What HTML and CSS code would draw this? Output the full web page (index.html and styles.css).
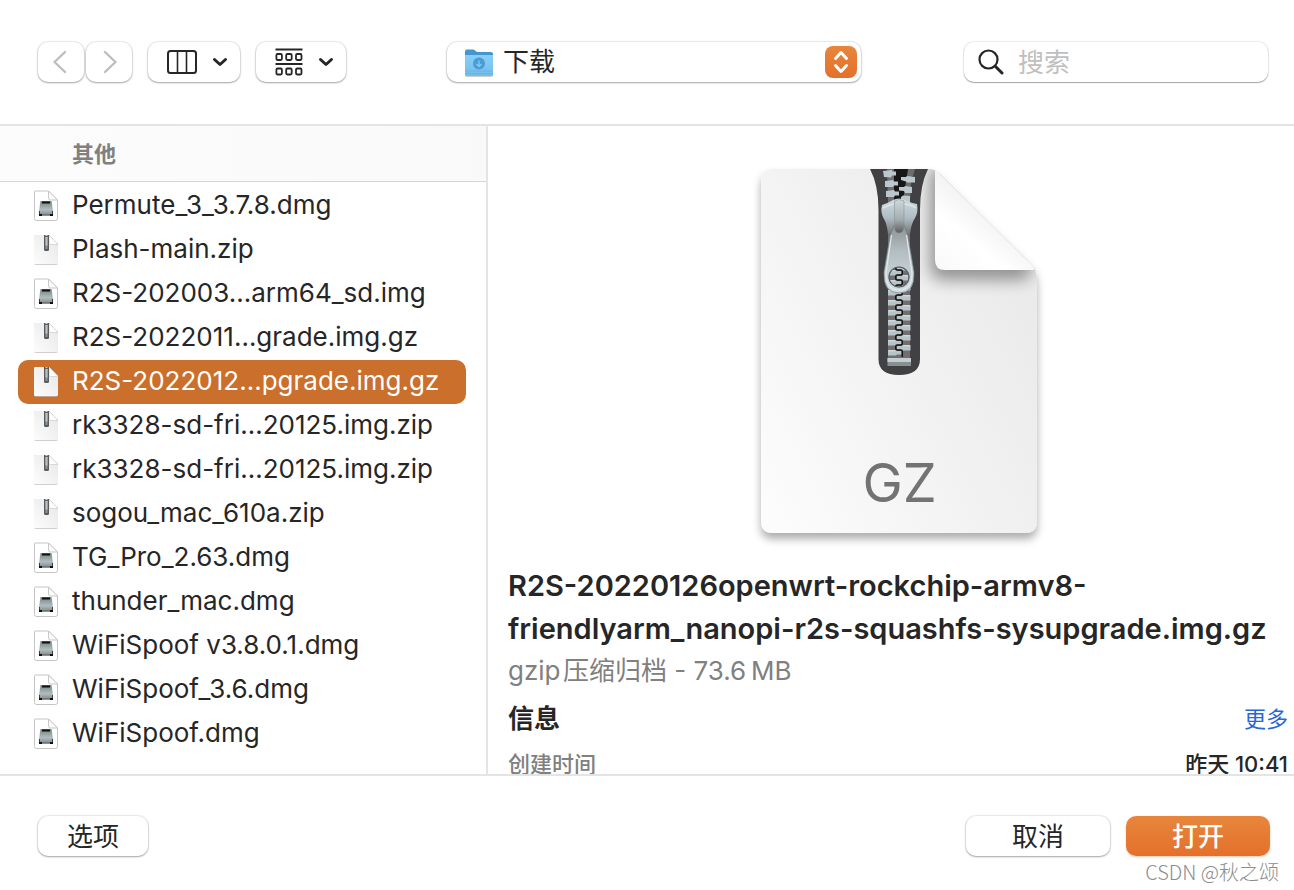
FILE: index.html
```html
<!DOCTYPE html>
<html lang="zh-Hans">
<head>
  <meta charset="UTF-8">
  <title>打开</title>
  <link rel="stylesheet" href="styles.css">
</head>
<body>
  <!-- shared icons -->
  <svg class="defs" width="0" height="0" aria-hidden="true">
    <defs>
      <linearGradient id="paper" x1="1" y1="0" x2="0" y2="1">
        <stop offset="0" stop-color="#e6e6e6"/>
        <stop offset="1" stop-color="#fdfdfd"/>
      </linearGradient>
      <linearGradient id="drive" x1="0" y1="0" x2="0" y2="1">
        <stop offset="0" stop-color="#6f8483"/>
        <stop offset="0.600" stop-color="#b3bcbf"/>
        <stop offset="1" stop-color="#7b8487"/>
      </linearGradient>
    </defs>
    <symbol id="icon-dmg" viewBox="0 0 28 32">
      <path d="M3.5 1h13L25.500 10v18.500a2 2 0 0 1-2 2h-19a2 2 0 0 1-2-2V2a1 1 0 0 1 1-1z" fill="#fff" stroke="#c4c4c4"/>
      <path d="M16.500 1v7a2 2 0 0 0 2 2h7z" fill="#fafafa" stroke="#c9c9c9"/>
      <path d="M8.500 11h11l1.500 10v4.500H7V21z" fill="url(#drive)"/>
      <path d="M10 12.500h8" stroke="#111" stroke-width="2"/>
      <path d="M7.500 21v4M20.500 21v4" stroke="#3c4244"/>
      <path d="M7 25h3M18 25h3" stroke="#111" stroke-width="2"/>
      <path d="M10 25h8" stroke="#596063"/>
    </symbol>
    <symbol id="icon-zip" viewBox="0 0 28 32">
      <path d="M3 1h14l9 9v19a2 2 0 0 1-2 2H4a2 2 0 0 1-2-2V2a1 1 0 0 1 1-1z" fill="#bbb" opacity="0.700"/>
      <path d="M3 1h14l9 9v18.500a1.500 1.500 0 0 1-1.500 1.500H3.500a1.500 1.500 0 0 1-1.500-1.500V2z" fill="url(#paper)"/>
      <path d="M17 1v8a1.500 1.500 0 0 0 1.500 1.500H26z" fill="#fff" stroke="#ccc" stroke-width="0.700"/>
      <path d="M12 1h5v14.500a1.500 1.500 0 0 1-1.500 1.500h-2a1.500 1.500 0 0 1-1.500-1.500z" fill="#5a5b5d"/>
      <path d="M14.500 1v3M14.500 11.500v4" stroke="#c5cdd0" stroke-width="2" stroke-dasharray="1 1"/>
      <path d="M14.500 4v6.500" stroke="#b7c0c4" stroke-width="2.400" stroke-linecap="round"/>
    </symbol>
    <symbol id="icon-chevron" viewBox="0 0 16 10">
      <path d="M2.500 2.500L8 7.500l5.500-5" fill="none" stroke="#262626" stroke-width="3" stroke-linecap="round" stroke-linejoin="round"/>
    </symbol>
  </svg>

  <div class="dialog">
    <header class="toolbar">
      <div class="nav-buttons">
        <button class="btn nav-btn" type="button" aria-label="后退" disabled>
          <svg width="16" height="24" viewBox="0 0 16 24"><path d="M12 2L1.500 12L12 22" fill="none" stroke="#bdbdbd" stroke-width="2.400" stroke-linecap="round" stroke-linejoin="round"/></svg>
        </button>
        <button class="btn nav-btn" type="button" aria-label="前进" disabled>
          <svg width="16" height="24" viewBox="0 0 16 24"><path d="M4 2L14.500 12L4 22" fill="none" stroke="#bdbdbd" stroke-width="2.400" stroke-linecap="round" stroke-linejoin="round"/></svg>
        </button>
      </div>
      <button class="btn view-btn" type="button" aria-label="分栏">
        <svg width="30" height="24" viewBox="0 0 30 24" fill="none" stroke="#262626">
          <rect x="1" y="1" width="28" height="22" rx="2.500" stroke-width="2"/>
          <path d="M10.500 1v22M19.500 1v22" stroke-width="1.600"/>
        </svg>
        <svg width="16" height="10"><use href="#icon-chevron"/></svg>
      </button>
      <button class="btn view-btn group-btn" type="button" aria-label="分组">
        <svg width="28" height="28" viewBox="0 0 28 28" fill="none" stroke="#262626" stroke-width="1.800">
          <path d="M0.500 1.500h27M0.500 16h27"/>
          <rect x="1.400" y="6" width="5.500" height="6" rx="1.200"/>
          <rect x="11.200" y="6" width="5.500" height="6" rx="1.200"/>
          <rect x="21" y="6" width="5.500" height="6" rx="1.200"/>
          <rect x="1.400" y="20.500" width="5.500" height="6" rx="1.200"/>
          <rect x="11.200" y="20.500" width="5.500" height="6" rx="1.200"/>
          <rect x="21" y="20.500" width="5.500" height="6" rx="1.200"/>
        </svg>
        <svg width="16" height="10"><use href="#icon-chevron"/></svg>
      </button>

      <div class="location">
        <svg class="folder" width="30" height="30" viewBox="0 0 30 30" aria-hidden="true">
          <defs>
            <linearGradient id="folder" x1="0" y1="0" x2="0" y2="1">
              <stop offset="0" stop-color="#86d0f8"/>
              <stop offset="1" stop-color="#74bdec"/>
            </linearGradient>
          </defs>
          <rect x="1" y="5" width="28" height="24" rx="2" fill="#9a9a9a" opacity="0.500"/>
          <path d="M1 3.500A2 2 0 0 1 3 1.500h6.500c1.500 0 2 2.500 4 2.500H27a2 2 0 0 1 2 2v6H1z" fill="#4596cf"/>
          <path d="M1 7h28v19.500a1.500 1.500 0 0 1-1.500 1.500h-25A1.500 1.500 0 0 1 1 26.500z" fill="url(#folder)"/>
          <path d="M1 23h28M1 25.500h28" stroke="#66b0e0" stroke-width="0.800"/>
          <circle cx="15" cy="15.500" r="6" fill="#4c9bd3"/>
          <path d="M15 12.500v5.500M12.500 16l2.500 2.500 2.500-2.500" fill="none" stroke="#83caf3" stroke-width="1.300"/>
        </svg>
        <select class="location-select" aria-label="位置">
          <option>下载</option>
        </select>
        <span class="stepper" aria-hidden="true">
          <svg width="32" height="32" viewBox="0 0 32 32" fill="none" stroke="#fff" stroke-width="3" stroke-linecap="round" stroke-linejoin="round"><path d="M10.500 12.500L16 6.500l5.500 6M10.500 19.500L16 25.500l5.500-6"/></svg>
        </span>
      </div>

      <label class="search">
        <svg width="26" height="26" viewBox="0 0 26 26" fill="none" stroke="#262626" aria-hidden="true">
          <circle cx="10.500" cy="10.500" r="9" stroke-width="2.200"/>
          <path d="M17.500 17.500l6.500 6.500" stroke-width="3" stroke-linecap="round"/>
        </svg>
        <input class="search-input" type="search" placeholder="搜索" aria-label="搜索">
      </label>
    </header>

    <main class="browser">
      <section class="column">
        <h2 class="group-title">其他</h2>
        <ul class="files">
          <li class="file"><svg class="file-icon"><use href="#icon-dmg"/></svg><span class="file-name">Permute_3_3.7.8.dmg</span></li>
          <li class="file"><svg class="file-icon"><use href="#icon-zip"/></svg><span class="file-name">Plash-main.zip</span></li>
          <li class="file"><svg class="file-icon"><use href="#icon-dmg"/></svg><span class="file-name">R2S-202003…arm64_sd.img</span></li>
          <li class="file"><svg class="file-icon"><use href="#icon-zip"/></svg><span class="file-name">R2S-2022011…grade.img.gz</span></li>
          <li class="file selected"><svg class="file-icon"><use href="#icon-zip"/></svg><span class="file-name">R2S-2022012…pgrade.img.gz</span></li>
          <li class="file"><svg class="file-icon"><use href="#icon-zip"/></svg><span class="file-name">rk3328-sd-fri…20125.img.zip</span></li>
          <li class="file"><svg class="file-icon"><use href="#icon-zip"/></svg><span class="file-name">rk3328-sd-fri…20125.img.zip</span></li>
          <li class="file"><svg class="file-icon"><use href="#icon-zip"/></svg><span class="file-name">sogou_mac_610a.zip</span></li>
          <li class="file"><svg class="file-icon"><use href="#icon-dmg"/></svg><span class="file-name">TG_Pro_2.63.dmg</span></li>
          <li class="file"><svg class="file-icon"><use href="#icon-dmg"/></svg><span class="file-name">thunder_mac.dmg</span></li>
          <li class="file"><svg class="file-icon"><use href="#icon-dmg"/></svg><span class="file-name">WiFiSpoof v3.8.0.1.dmg</span></li>
          <li class="file"><svg class="file-icon"><use href="#icon-dmg"/></svg><span class="file-name">WiFiSpoof_3.6.dmg</span></li>
          <li class="file"><svg class="file-icon"><use href="#icon-dmg"/></svg><span class="file-name">WiFiSpoof.dmg</span></li>
        </ul>
      </section>

      <section class="preview">
        <svg class="preview-icon" width="320" height="410" viewBox="-2 0 320 410" role="img" aria-label="GZ">
          <defs>
            <linearGradient id="sheet" x1="1" y1="0.200" x2="0" y2="0.900">
              <stop offset="0" stop-color="#e9e9e9"/>
              <stop offset="0.500" stop-color="#f2f2f2"/>
              <stop offset="1" stop-color="#fcfcfc"/>
            </linearGradient>
            <linearGradient id="fold" x1="0.600" y1="0.400" x2="0.100" y2="1">
              <stop offset="0" stop-color="#f0f0f0"/>
              <stop offset="0.500" stop-color="#fff"/>
              <stop offset="1" stop-color="#fafafa"/>
            </linearGradient>
            <linearGradient id="metal" x1="0" y1="0" x2="0" y2="1">
              <stop offset="0" stop-color="#d3dde1"/>
              <stop offset="0.550" stop-color="#aebbc2"/>
              <stop offset="1" stop-color="#777"/>
            </linearGradient>
            <linearGradient id="bridge" x1="0" y1="0" x2="0" y2="1">
              <stop offset="0" stop-color="#cdd8dc"/>
              <stop offset="0.600" stop-color="#a3adb1"/>
              <stop offset="1" stop-color="#5d5d5d"/>
            </linearGradient>
            <linearGradient id="pull" x1="0" y1="0" x2="0" y2="1">
              <stop offset="0" stop-color="#8c9193"/>
              <stop offset="0.400" stop-color="#b5bfc3"/>
              <stop offset="1" stop-color="#d2dde2"/>
            </linearGradient>
            <filter id="drop" x="-10%" y="-10%" width="120%" height="120%">
              <feDropShadow dx="0" dy="6" stdDeviation="4" flood-color="#000" flood-opacity="0.320"/>
            </filter>
            <filter id="soft" x="-40%" y="-40%" width="180%" height="180%">
              <feGaussianBlur stdDeviation="8"/>
            </filter>
            <clipPath id="sheet-clip">
              <path d="M33 19H189Q195 19 200 24L292 115Q297 120 297 130V371Q297 383 285 383H33Q21 383 21 371V31Q21 19 33 19z"/>
            </clipPath>
            <clipPath id="tape-clip">
              <path d="M130 19H188Q180 35 180 60V209Q180 225 159 225Q138.500 225 138.500 209V60Q138.500 35 130 19z"/>
            </clipPath>
            <g id="tooth-l">
              <path d="M148 0h8l1 1h4.500v3.500H157l-1 1h-8z" fill="#b7c4ca"/>
              <path d="M148.500 0.800h7" stroke="#d8e2e6"/>
            </g>
            <g id="tooth-r">
              <path d="M170.500 0h-8l-1 1H157v3.500h4.500l1 1h8z" fill="#b7c4ca"/>
              <path d="M170 0.800h-7" stroke="#d8e2e6"/>
            </g>
            <!-- one period of the seam between the teeth -->
            <path id="seam" d="M159 0h1.500q1.800 0 1.800 1.500v2q0 1.500-1.800 1.500h-3q-1.800 0-1.800 1.500v2q0 1.500 1.800 1.500h1.500" fill="none" stroke="#161616" stroke-width="1.500"/>
          </defs>

          <path d="M33 19H189Q195 19 200 24L292 115Q297 120 297 130V371Q297 383 285 383H33Q21 383 21 371V31Q21 19 33 19z" fill="url(#sheet)" filter="url(#drop)"/>
          <g clip-path="url(#sheet-clip)">
            <path d="M190 24V116Q190 130 203 130H286L294 114L200 14z" fill="#000" opacity="0.380" filter="url(#soft)"/>
          </g>
          <path d="M195 20V110Q195 120 205 120H293Q296 120 292 115L200 24Q198 21 195 20z" fill="url(#fold)"/>

          <g clip-path="url(#tape-clip)">
            <path d="M125 15h70v215h-70z" fill="#414143"/>
            <path d="M147 19h25l-2 32v160h-22V51z" fill="#726e6d"/>
            <path d="M154 19h14l-5 32h-9z" fill="#171717"/>
            <!-- open part above the slider -->
            <g fill="#bac7cd">
              <path d="M143 21l9-1v1.500h4v4h-4l-1 2-7-.5z"/>
              <path d="M145 31l8-1 1 1.500h4v4h-4l-1 1.500h-8z"/>
              <path d="M146 41l8-1 1 1.500h4v4h-4l-1 1.500h-8z"/>
              <path d="M175 27l-8-1-1 1h-5v3l5 1.500 1 1h8z"/>
              <path d="M172 37l-7-1-1 1h-5v3.500l5 .5 1 2h7z"/>
              <path d="M170 46l-7-.5-2 1.500v5h9z"/>
            </g>
            <path d="M168 19h7l-2 7h-5z" fill="#6f6b6a"/>
            <use href="#tooth-l" y="120"/><use href="#tooth-l" y="130"/><use href="#tooth-l" y="140"/>
            <use href="#tooth-l" y="150"/><use href="#tooth-l" y="160"/><use href="#tooth-l" y="170"/>
            <use href="#tooth-l" y="180"/><use href="#tooth-l" y="190"/><use href="#tooth-l" y="200"/>
            <use href="#tooth-r" y="115"/><use href="#tooth-r" y="125"/><use href="#tooth-r" y="135"/>
            <use href="#tooth-r" y="145"/><use href="#tooth-r" y="155"/><use href="#tooth-r" y="165"/>
            <use href="#tooth-r" y="175"/><use href="#tooth-r" y="185"/><use href="#tooth-r" y="195"/>
            <use href="#seam" y="110"/><use href="#seam" y="120"/><use href="#seam" y="130"/>
            <use href="#seam" y="140"/><use href="#seam" y="150"/><use href="#seam" y="160"/>
            <use href="#seam" y="170"/><use href="#seam" y="180"/><use href="#seam" y="190"/>
            <path d="M159 200h1.500q1.800 0 1.800 1.500v5.500" fill="none" stroke="#161616" stroke-width="1.500"/>
            <rect x="147.500" y="208" width="23.500" height="8" fill="#8a9092"/>
            <rect x="147.500" y="208" width="23.500" height="4" fill="#c3ced3"/>
          </g>

          <!-- slider body -->
          <path d="M153 50Q159 47 165 50Q171 53 177 54Q178.500 62 175 68Q171 74 170 84H148Q147 74 144 69Q140 62 142 55Q148 53 153 50z" fill="url(#metal)"/>
          <path d="M143 58q8-4 11-4M164 54q8 1 12 4" fill="none" stroke="#dde6ea" stroke-width="1.500"/>
          <!-- pull tab, with a see-through ring -->
          <path d="M154 75H164L168 86L174 122Q175 143 159 143Q143 143 144 122L150 86zM159 117a10 10 0 1 0 0 20a10 10 0 1 0 0-20z" fill="url(#pull)" fill-rule="evenodd" stroke="#717c82" stroke-width="0.700"/>
          <path d="M151.500 85L146 123Q146 140 159 140Q172 140 172 123L166.500 85" fill="none" stroke="#e3eaed" stroke-width="1.200"/>
          <circle cx="159" cy="127" r="10" fill="none" stroke="#566066" stroke-width="1.200"/>
          <path d="M154.500 51Q159 48 164 51V78Q163 83 159 83Q155 83 154.500 78z" fill="url(#bridge)" stroke="#87949b" stroke-width="0.600"/>

          <text class="preview-kind" x="159.500" y="352" text-anchor="middle">GZ</text>
        </svg>

        <h1 class="preview-name">R2S-20220126openwrt-rockchip-armv8-<br>friendlyarm_nanopi-r2s-squashfs-sysupgrade.img.gz</h1>
        <p class="preview-type">gzip&#8202;压缩归档 - 73.6&#8201;MB</p>
        <div class="info-head">
          <h2 class="info-title">信息</h2>
          <a class="more" href="#">更多</a>
        </div>
        <dl class="info-row">
          <dt>创建时间</dt>
          <dd>昨天 10:41</dd>
        </dl>
      </section>
    </main>

    <footer class="actions">
      <button class="btn action-btn options-btn" type="button">选项</button>
      <button class="btn action-btn cancel-btn" type="button">取消</button>
      <button class="btn action-btn open-btn" type="button">打开</button>
    </footer>
    <span class="watermark">CSDN @秋之颂</span>
  </div>
</body>
</html>
```
FILE: styles.css
```css
* {
  box-sizing: border-box;
}

body {
  margin: 0;
  background: #fff;
  color: #262626;
  font-family: Inter, "Noto Sans CJK SC", sans-serif;
  font-size: 26px;
}

h1, h2, p, ul, dl, dd {
  margin: 0;
  padding: 0;
}

.defs {
  position: absolute;
}

.dialog {
  position: relative;
  display: flex;
  flex-direction: column;
  height: 100vh;
  overflow: hidden;
}

/* buttons */
.btn {
  display: flex;
  align-items: center;
  justify-content: center;
  height: 40px;
  padding: 0;
  border: none;
  border-radius: 10px;
  background: #fff;
  color: #262626;
  font-family: inherit;
  font-size: 26px;
  box-shadow: 0 0 1px 1px rgba(0, 0, 0, 0.08), 0 1px 2px rgba(0, 0, 0, 0.3);
}

/* top bar */
.toolbar {
  display: flex;
  align-items: center;
  flex: none;
  height: 126px;
  padding: 0 26px 0 38px;
  border-bottom: 2px solid #e4e4e4;
}

.nav-buttons {
  display: flex;
  gap: 2px;
  margin-right: 16px;
}

.nav-btn {
  width: 46px;
}

.view-btn {
  gap: 15px;
  width: 92px;
  margin-right: 16px;
  padding-left: 6px;
}

.group-btn {
  width: 90px;
  margin-right: 101px;
}

.location {
  position: relative;
  flex: 1;
  max-width: 414px;
  margin-right: 103px;
}

.location-select {
  display: block;
  width: 100%;
  height: 40px;
  padding: 0 44px 2px 56px;
  border: none;
  border-radius: 10px;
  appearance: none;
  background: #fff;
  color: #262626;
  font-family: inherit;
  font-size: 26px;
  box-shadow: 0 0 1px 1px rgba(0, 0, 0, 0.08), 0 1px 2px rgba(0, 0, 0, 0.3);
}

.folder {
  position: absolute;
  top: 6px;
  left: 17px;
}

.stepper {
  position: absolute;
  top: 4px;
  right: 4px;
  height: 32px;
  border-radius: 8px;
  background: linear-gradient(#e8863c, #e4702b);
  pointer-events: none;
}

.search {
  display: flex;
  align-items: center;
  gap: 14px;
  width: 304px;
  height: 40px;
  margin-left: auto;
  padding-left: 14px;
  border-radius: 10px;
  box-shadow: 0 0 1px 1px rgba(0, 0, 0, 0.08), 0 1px 1px rgba(0, 0, 0, 0.3);
}

.search-input {
  flex: 1;
  min-width: 0;
  height: 40px;
  padding: 0;
  border: none;
  outline: none;
  background: none;
  font-family: inherit;
  font-size: 26px;
}

.search-input::placeholder {
  color: #bfbfbf;
}

/* file column */
.browser {
  display: flex;
  flex: 1;
  min-height: 0;
}

.column {
  flex: none;
  width: 488px;
  border-right: 2px solid #e4e4e4;
  overflow: hidden;
}

.group-title {
  height: 56px;
  padding-left: 72px;
  border-bottom: 1px solid #d6d6d6;
  background: linear-gradient(to right, #fcfcfc, #f9f9f9);
  color: #808080;
  font-size: 22px;
  font-weight: 600;
  line-height: 56px;
}

.files {
  padding: 2px 20px 0 18px;
  list-style: none;
}

.file {
  display: flex;
  align-items: center;
  gap: 12px;
  height: 44px;
  padding-left: 14px;
  border-radius: 10px;
  white-space: nowrap;
}

.file-icon {
  width: 28px;
  height: 32px;
}

.file-name {
  padding-bottom: 3px;
}

.selected {
  background: #ca6f2c;
  color: #fff;
}

/* preview pane */
.preview {
  flex: 1;
  min-width: 0;
  padding: 24px 6px 0 20px;
  overflow: hidden;
}

.preview-icon {
  display: block;
  margin: 0 auto 4px;
}

.preview-kind {
  fill: #737373;
  font-size: 54px;
  font-weight: 400;
}

.preview-name {
  font-size: 29px;
  font-weight: 600;
  line-height: 43px;
}

.preview-type {
  color: #808080;
  font-size: 26px;
  line-height: 42px;
}

.info-head,
.info-row {
  display: flex;
  justify-content: space-between;
}

.info-head {
  line-height: 54px;
}

.info-title {
  font-size: 26px;
  font-weight: 700;
}

.more {
  color: #2667d9;
  font-size: 22px;
  text-decoration: none;
}

.info-row {
  font-size: 22px;
  font-weight: 500;
  line-height: 36px;
}

.info-row dt {
  color: #808080;
}

/* bottom bar */
.actions {
  display: flex;
  align-items: flex-start;
  flex: none;
  gap: 16px;
  height: 116px;
  padding: 40px 24px 0 38px;
  border-top: 2px solid #e4e4e4;
}

.action-btn {
  width: 144px;
  padding-bottom: 4px;
}

.options-btn {
  width: 110px;
  margin-right: auto;
}

.open-btn {
  background: linear-gradient(#e8863c, #e4702b);
  color: #fff;
  font-weight: 500;
  box-shadow: 0 1px 2px rgba(228, 112, 43, 0.4);
}

.watermark {
  position: absolute;
  right: 15px;
  bottom: 4px;
  color: #8c8c8c;
  font-family: "Noto Sans CJK SC", sans-serif;
  font-size: 20px;
  font-weight: 300;
}
```
